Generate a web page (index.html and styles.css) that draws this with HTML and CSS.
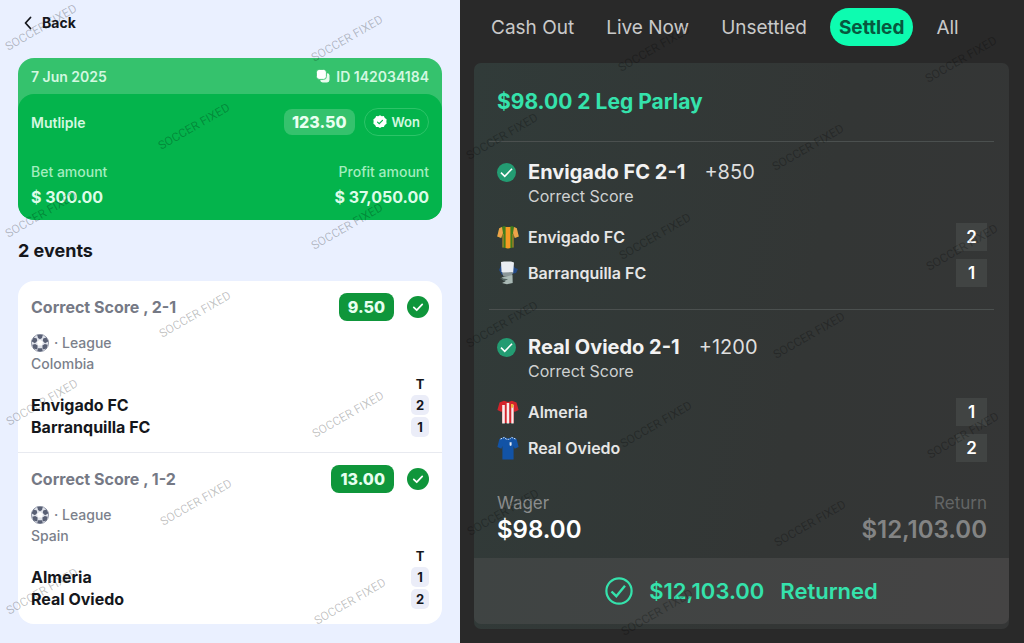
FILE: index.html
```html
<!DOCTYPE html>
<html lang="en">
<head>
    <meta charset="UTF-8">
    <meta name="viewport" content="width=device-width, initial-scale=1.0">
    <title>Bet slips</title>
    <link rel="stylesheet" href="styles.css">
</head>
<body>

<!-- shared icons -->
<svg class="defs" aria-hidden="true">
    <symbol id="check" viewBox="0 0 24 24">
        <circle cx="12" cy="12" r="12"/>
        <path d="M7.4 12.4l3.2 3.1 6-6.4" fill="none" stroke="#fff" stroke-width="1.9" stroke-linecap="round" stroke-linejoin="round"/>
    </symbol>
    <symbol id="check-wide" viewBox="0 0 24 24">
        <circle cx="12" cy="12" r="12"/>
        <path d="M5 12.200l4.800 4.600 9.200-9.600" fill="none" stroke="#fff" stroke-width="2"/>
    </symbol>
    <symbol id="ball" viewBox="0 0 18 18">
        <circle cx="9" cy="9" r="8.6" fill="#dfe2ea" stroke="#82889a" stroke-width=".8"/>
        <g fill="#596075">
            <path d="M6.2.8h5.6L11 4.1 9 5.2 7 4.1z"/>
            <path d="M.5 7.3l2.1-3.8 3.2 1.1.4 2.5-2.3 2.1z"/>
            <path d="M17.5 7.3l-2.1-3.8-3.2 1.1-.4 2.5 2.3 2.1z"/>
            <path d="M2.3 14.6l-.9-3.8 2.8-.7 2.4 1.5-.2 3.8z"/>
            <path d="M15.7 14.6l.9-3.8-2.8-.7-2.4 1.5.2 3.8z"/>
            <path d="M7 14.2h4l.7 2.7a8 8 0 0 1-5.4 0z"/>
        </g>
        <path d="M9 5.8l3 2.2-1.1 3.5H7.1L6 8z" fill="#fff"/>
    </symbol>
</svg>

<main class="page">
    <section class="slip">
        <a class="back" href="#">
            <svg width="8" height="14" viewBox="0 0 8 14" aria-hidden="true"><path d="M6.5 1.5L1.5 7l5 5.5" fill="none" stroke="#15171c" stroke-width="1.8" stroke-linecap="round" stroke-linejoin="round"/></svg>
            Back
        </a>

        <div class="ticket">
            <div class="ticket-head">
                <span>7 Jun 2025</span>
                <button type="button" class="copy">
                    <svg width="14" height="14" viewBox="0 0 14 14" aria-hidden="true">
                        <rect x="4.2" y="4.2" width="9.3" height="9.3" rx="2.4" fill="#e9fbef"/>
                        <rect x=".4" y=".4" width="10" height="10" rx="2.8" fill="#fff" stroke="#35c26d" stroke-width=".9"/>
                    </svg>
                    ID 142034184
                </button>
            </div>
            <div class="ticket-body">
                <div class="ticket-row">
                    <span class="kind">Mutliple</span>
                    <span class="total-odds">123.50</span>
                    <span class="won">
                        <svg width="14" height="14" viewBox="0 0 14 14" aria-hidden="true">
                            <path d="M7 .2l1.8 1 2-.1 1 1.9 1.8 1.2-.2 2.2.2 2.4-1.8 1.1-1 2-2.1.1-1.7 1-1.8-1-2.1-.1-1-2L.4 8.7l.2-2.4L.4 4.2l1.8-1.1 1-2 2 .1z" fill="#fff"/>
                            <path d="M4.5 7.1l1.7 1.6 3.3-3.3" fill="none" stroke="#04b44c" stroke-width="1.2" stroke-linecap="round"/>
                        </svg>
                        Won
                    </span>
                </div>
                <div class="amounts">
                    <p>Bet amount<strong>$ 300.00</strong></p>
                    <p>Profit amount<strong>$ 37,050.00</strong></p>
                </div>
            </div>
        </div>

        <h2 class="events-title">2 events</h2>

        <div class="events">
            <article class="event">
                <div class="event-head">
                    <h3>Correct Score , 2-1</h3>
                    <span class="odds">9.50</span>
                    <svg class="tick" aria-hidden="true"><use href="#check"/></svg>
                </div>
                <p class="league"><svg class="ball" aria-hidden="true"><use href="#ball"/></svg>· League</p>
                <p class="country">Colombia</p>
                <table class="result">
                    <tr><td></td><th>T</th></tr>
                    <tr><td>Envigado FC</td><td><span>2</span></td></tr>
                    <tr><td>Barranquilla FC</td><td><span>1</span></td></tr>
                </table>
            </article>
            <article class="event">
                <div class="event-head">
                    <h3>Correct Score , 1-2</h3>
                    <span class="odds">13.00</span>
                    <svg class="tick" aria-hidden="true"><use href="#check"/></svg>
                </div>
                <p class="league"><svg class="ball" aria-hidden="true"><use href="#ball"/></svg>· League</p>
                <p class="country">Spain</p>
                <table class="result">
                    <tr><td></td><th>T</th></tr>
                    <tr><td>Almeria</td><td><span>1</span></td></tr>
                    <tr><td>Real Oviedo</td><td><span>2</span></td></tr>
                </table>
            </article>
        </div>
    </section>

    <section class="history">
        <nav class="tabs">
            <button type="button">Cash Out</button>
            <button type="button">Live Now</button>
            <button type="button">Unsettled</button>
            <button type="button" class="active">Settled</button>
            <button type="button">All</button>
        </nav>

        <div class="parlay">
            <h2>$98.00 2 Leg Parlay</h2>

            <article class="leg">
                <div class="pick">
                    <svg class="pick-tick" aria-hidden="true"><use href="#check-wide"/></svg>
                    <h3>Envigado FC 2-1</h3>
                    <span class="price">+850</span>
                </div>
                <p class="market">Correct Score</p>
                <table class="teams">
                    <tr>
                        <td class="shirt"><svg width="22" height="24" viewBox="0 0 22 24" aria-hidden="true">
                            <path d="M7 1L2.2 3.2.2 11.6l4 1.4L5.5 10v12.4l5.5 1.2 5.5-1.2V10l1.3 3 4-1.4-2-8.4L15 1l-4 1.6z" fill="#3f7d1e"/>
                            <path d="M5 2L2.2 3.2.2 11.6l4 1.4L6 8zM17 2l2.8 1.2 2 8.4-4 1.4L16 8z" fill="#efa24a"/>
                            <path d="M8.6 2h4.8v21l-2.4.6-2.4-.6z" fill="#f59a24"/>
                            <path d="M5.5 9h1v13.600l-1-.2zM15.500 9h1v13.400l-1 .2z" fill="#c7812a"/>
                        </svg></td>
                        <td>Envigado FC</td>
                        <td class="goals"><span>2</span></td>
                    </tr>
                    <tr>
                        <td class="shirt"><svg width="22" height="24" viewBox="0 0 22 24" aria-hidden="true">
                            <path d="M2 9l3-7 2 11-2 1zM15 2l3 5 3 1-2 4-5 1z" fill="#244a86"/>
                            <path d="M4 1l3-.6h7l3 1-.8 9.800-3.200 3H8L4.500 10.500z" fill="#e9edf2"/>
                            <path d="M5 11.500l11-.4-1.500 4.900-8-.5z" fill="#8a9698"/>
                            <path d="M4.500 16.500l7-1.500 4-1 .2 8-5.700 1.300-5-1.200 3.500-1.800z" fill="#a9b9b5"/>
                            <path d="M3 17l8 1.200-4 2z" fill="#526260"/>
                        </svg></td>
                        <td>Barranquilla FC</td>
                        <td class="goals"><span>1</span></td>
                    </tr>
                </table>
            </article>

            <article class="leg">
                <div class="pick">
                    <svg class="pick-tick" aria-hidden="true"><use href="#check-wide"/></svg>
                    <h3>Real Oviedo 2-1</h3>
                    <span class="price">+1200</span>
                </div>
                <p class="market">Correct Score</p>
                <table class="teams">
                    <tr>
                        <td class="shirt"><svg width="22" height="24" viewBox="0 0 22 24" aria-hidden="true">
                            <path d="M7 .8L2.500 2.600.4 10l4 2L5 11v12h12V11l.6 1 4-2-2.100-7.400L15 .8l-4 1.200z" fill="#d3242c"/>
                            <path d="M5.200 5h2.600v18.500H5.200zM9.700 3h2.500v20.500H9.700zM14.300 5h2.300v18.500h-2.300z" fill="#f7eeee"/>
                            <path d="M14 4h2.400v3L15 8.200 14 7z" fill="#f1b13b"/>
                        </svg></td>
                        <td>Almeria</td>
                        <td class="goals"><span>1</span></td>
                    </tr>
                    <tr>
                        <td class="shirt"><svg width="22" height="24" viewBox="0 0 22 24" aria-hidden="true">
                            <path d="M7 1L2.400 3 .4 11l4 1.800L5.400 10v13.400h11.200V10l1 2.800 4-1.800-2-8L15 1l-4 1.500z" fill="#1253a6"/>
                            <path d="M3.500 3l4-1.600M18.500 3l-4-1.600M8 2.300q3 2.200 6 0" fill="none" stroke="#dbe7f5" stroke-width="1" stroke-dasharray="1.800 1"/>
                            <path d="M12.600 6.200h2v3l-1 .8-1-.8z" fill="#e8eef6"/>
                        </svg></td>
                        <td>Real Oviedo</td>
                        <td class="goals"><span>2</span></td>
                    </tr>
                </table>
            </article>

            <div class="money">
                <p>Wager<strong>$98.00</strong></p>
                <p class="return">Return<strong>$12,103.00</strong></p>
            </div>

            <div class="returned">
                <svg width="28" height="28" viewBox="0 0 28 28" aria-hidden="true">
                    <circle cx="14" cy="14" r="12.600" fill="none" stroke="#35e2ac" stroke-width="2.200"/>
                    <path d="M6.500 14.500l4.800 4.700L20 8.800" fill="none" stroke="#35e2ac" stroke-width="2.400"/>
                </svg>
                <span>$12,103.00</span>
                <span>Returned</span>
            </div>
        </div>
    </section>

    <svg class="watermark" aria-hidden="true">
        <g>
            <text transform="translate(43 31) rotate(-30)">SOCCER FIXED</text>
            <text transform="translate(43 218) rotate(-30)">SOCCER FIXED</text>
            <text transform="translate(44 406) rotate(-30)">SOCCER FIXED</text>
            <text transform="translate(44 595) rotate(-30)">SOCCER FIXED</text>
            <text transform="translate(196 130) rotate(-30)">SOCCER FIXED</text>
            <text transform="translate(197 318) rotate(-30)">SOCCER FIXED</text>
            <text transform="translate(198 506) rotate(-30)">SOCCER FIXED</text>
            <text transform="translate(349 42) rotate(-30)">SOCCER FIXED</text>
            <text transform="translate(349 230) rotate(-30)">SOCCER FIXED</text>
            <text transform="translate(350 418) rotate(-30)">SOCCER FIXED</text>
            <text transform="translate(352 605) rotate(-30)">SOCCER FIXED</text>
        </g>
        <g class="on-dark">
            <text transform="translate(504 140) rotate(-30)">SOCCER FIXED</text>
            <text transform="translate(504 328) rotate(-30)">SOCCER FIXED</text>
            <text transform="translate(505 516) rotate(-30)">SOCCER FIXED</text>
            <text transform="translate(656 52) rotate(-30)">SOCCER FIXED</text>
            <text transform="translate(657 240) rotate(-30)">SOCCER FIXED</text>
            <text transform="translate(658 428) rotate(-30)">SOCCER FIXED</text>
            <text transform="translate(659 616) rotate(-30)">SOCCER FIXED</text>
            <text transform="translate(810 151) rotate(-30)">SOCCER FIXED</text>
            <text transform="translate(811 339) rotate(-30)">SOCCER FIXED</text>
            <text transform="translate(812 527) rotate(-30)">SOCCER FIXED</text>
            <text transform="translate(963 63) rotate(-30)">SOCCER FIXED</text>
            <text transform="translate(964 251) rotate(-30)">SOCCER FIXED</text>
            <text transform="translate(965 439) rotate(-30)">SOCCER FIXED</text>
        </g>
    </svg>
</main>

</body>
</html>
```
FILE: styles.css
```css
* {
    box-sizing: border-box;
}
body {
    margin: 0;
    font-family: Inter, "Liberation Sans", sans-serif;
}
h2, h3, p {
    margin: 0;
}
button {
    border: none;
    background: none;
    padding: 0;
    font: inherit;
    color: inherit;
    cursor: pointer;
}
table {
    width: 100%;
    border-collapse: collapse;
}
td, th {
    padding: 0;
}
.defs {
    position: absolute;
    width: 0;
    height: 0;
}
.page {
    position: relative;
    display: grid;
    grid-template-columns: 460fr 564fr;
    min-height: 100vh;
}

/* light slip */
.slip {
    background: #eaf0ff;
    padding: 11px 18px 18px;
}
.back {
    display: flex;
    align-items: center;
    gap: 10px;
    padding-left: 6px;
    line-height: 24px;
    font-size: 14px;
    font-weight: 700;
    color: #15171c;
    text-decoration: none;
}
.ticket {
    margin-top: 23px;
    border-radius: 16px;
    background: #35c26d;
    overflow: hidden;
    color: #d3f8e0;
    font-size: 14px;
}
.ticket-head {
    display: flex;
    justify-content: space-between;
    align-items: center;
    height: 36px;
    padding: 0 13px;
    font-weight: 600;
}
.copy {
    display: flex;
    align-items: center;
    gap: 6px;
}
.ticket-body {
    padding: 14px 13px 10px;
    border-radius: 16px;
    background: #04b44c;
}
.ticket-row {
    display: flex;
    align-items: center;
    gap: 9px;
    height: 28px;
}
.kind {
    margin-right: auto;
    font-weight: 600;
}
.total-odds {
    padding: 0 8px;
    border-radius: 8px;
    background: #35c26d;
    line-height: 26px;
    font-size: 16px;
    font-weight: 800;
    color: #eafff1;
}
.won {
    display: flex;
    align-items: center;
    gap: 5px;
    height: 28px;
    padding: 0 8px;
    border: 1px solid #2cc468;
    border-radius: 14px;
    font-size: 13px;
    font-weight: 600;
}
.amounts {
    display: flex;
    justify-content: space-between;
    margin-top: 24px;
    line-height: 24px;
    font-weight: 500;
    color: #a3edbf;
}
.amounts p:last-child {
    text-align: right;
}
.amounts strong {
    display: block;
    line-height: 26px;
    font-size: 16px;
    font-weight: 700;
    color: #dcfce8;
}
.events-title {
    margin: 19px 0 18px;
    line-height: 24px;
    font-size: 18px;
    font-weight: 700;
    color: #15171c;
}
.events {
    border-radius: 16px;
    background: #fff;
}
.event {
    padding: 12px 13px 14px;
}
.event + .event {
    border-top: 1px solid #e8eaf0;
}
.event-head {
    display: flex;
    align-items: center;
    height: 28px;
}
.event-head h3 {
    margin-right: auto;
    font-size: 16px;
    font-weight: 700;
    color: #757985;
}
.odds {
    padding: 0 9px;
    border-radius: 8px;
    background: #0f963b;
    line-height: 28px;
    font-size: 16px;
    font-weight: 800;
    color: #e6fff0;
}
.tick {
    width: 22px;
    height: 22px;
    margin-left: 13px;
    fill: #0f963b;
}
.league, .country {
    font-size: 14px;
    font-weight: 500;
    color: #7b7f8b;
}
.league {
    display: flex;
    align-items: center;
    gap: 5px;
    margin-top: 11px;
    line-height: 22px;
}
.ball {
    width: 18px;
    height: 18px;
}
.country {
    line-height: 20px;
}
.result {
    line-height: 22px;
    font-size: 16px;
    font-weight: 700;
    color: #15171c;
}
.result th, .result td:last-child {
    width: 18px;
    text-align: center;
    font-size: 13px;
}
.result th {
    line-height: 20px;
}
.result span {
    display: block;
    border-radius: 5px;
    background: #ebedf8;
    line-height: 20px;
}

/* dark history */
.history {
    background: #292929;
    padding: 8px 15px 15px 14px;
}
.tabs {
    display: flex;
    gap: 14px;
    padding-left: 8px;
    font-size: 19px;
    color: #c9c9c9;
}
.tabs button {
    height: 38px;
    padding: 0 9px;
    border-radius: 19px;
}
.tabs .active {
    background: #0dfcb0;
    font-weight: 700;
    color: #07583f;
}
.parlay {
    margin-top: 17px;
    border-radius: 7px;
    background: linear-gradient(100deg, #313b39, #333635 60%, #353636);
    padding-bottom: 5px;
    color: #f2f2f2;
}
.parlay h2 {
    padding: 0 23px;
    line-height: 78px;
    font-size: 21px;
    font-weight: 700;
    color: #35e2ac;
}
.leg {
    margin: 0 15px;
    padding: 16px 7px 18px 8px;
    border-top: 1px solid #4b504f;
}
.leg + .leg {
    padding: 23px 7px 18px 8px;
}
.pick {
    display: flex;
    align-items: center;
    line-height: 28px;
    font-size: 20px;
}
.pick h3 {
    margin: 0 19px 0 12px;
    font-size: 20px;
    font-weight: 700;
}
.pick-tick {
    width: 19px;
    height: 19px;
    fill: #239c72;
}
.price {
    color: #dedede;
}
.market {
    margin-bottom: 13px;
    padding-left: 31px;
    line-height: 20px;
    font-size: 16px;
    color: #cfd1d1;
}
.teams {
    font-size: 16px;
    font-weight: 600;
    color: #e6e6e6;
}
.teams td {
    height: 36px;
}
.teams svg {
    display: block;
}
.teams .shirt {
    width: 31px;
}
.goals {
    width: 31px;
    text-align: center;
    font-size: 17px;
}
.goals span {
    display: block;
    background: #414443;
    line-height: 28px;
    color: #fff;
}
.money {
    display: flex;
    justify-content: space-between;
    padding: 8px 22px 12px 23px;
    line-height: 22px;
    font-size: 17px;
    color: #8b8d8d;
}
.money strong {
    display: block;
    line-height: 32px;
    font-size: 24px;
    font-weight: 600;
    color: #fff;
}
.money .return {
    text-align: right;
    color: #636565;
}
.money .return strong {
    color: #838484;
}
.returned {
    display: flex;
    justify-content: center;
    align-items: center;
    gap: 16px;
    height: 66px;
    border-radius: 0 0 7px 7px;
    background: linear-gradient(100deg, #3f4443, #454444);
    font-size: 22px;
    font-weight: 600;
    color: #35e2ac;
}

/* overlay across both slips */
.watermark {
    position: absolute;
    top: 0;
    left: 0;
    width: 100%;
    height: 100%;
    overflow: hidden;
    pointer-events: none;
    font-family: Roboto, sans-serif;
    font-size: 12px;
    text-anchor: middle;
    fill: #000;
    fill-opacity: .24;
}
.on-dark {
    fill-opacity: .25;
}
```
